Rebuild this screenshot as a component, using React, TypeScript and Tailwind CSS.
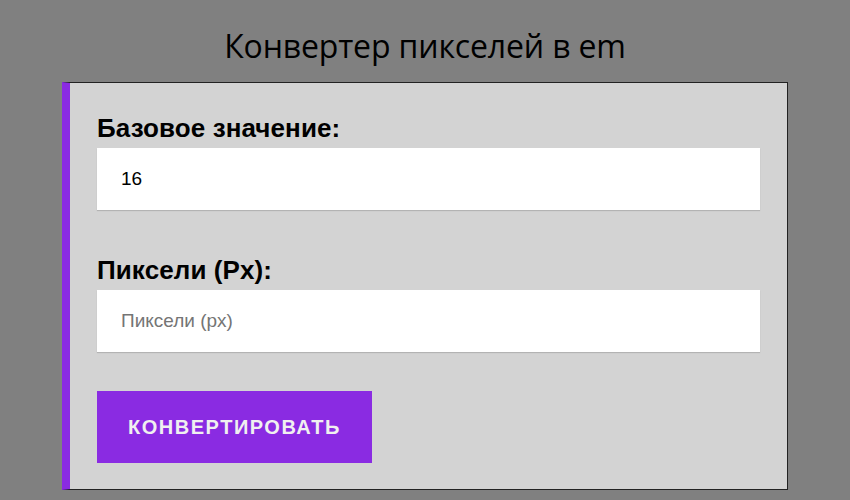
import React from "react";

export default function App() {
  return (
    <div className="min-h-[500px] bg-[#808080] pt-[22px] font-['Liberation_Sans',Arial,sans-serif]">
      <h1 className="text-center text-[32px] leading-[48px] text-black font-['Open_Sans',sans-serif] font-normal tracking-[-0.15px]">
        Конвертер пикселей в em
      </h1>
      <div className="mx-[62px] mt-[12px] border-l-[8px] border-l-[#8a2be2] border-t border-r border-b border-t-[#222] border-r-[#222] border-b-[#222] bg-[#d3d3d3] px-[27px] pt-[28px] pb-[26px]">
        <label className="block text-[26px] font-bold leading-[34px] tracking-[0.1px] text-black">
          Базовое значение:
        </label>
        <input
          defaultValue="16"
          className="mt-[3px] block h-[62px] w-full bg-white px-[24px] text-[19px] text-black outline-none shadow-[0_1px_1px_rgba(0,0,0,0.15)]"
        />
        <label className="mt-[43px] block text-[26px] font-bold leading-[34px] tracking-[0.1px] text-black">
          Пиксели (Px):
        </label>
        <input
          placeholder="Пиксели (px)"
          className="mt-[3px] block h-[62px] w-full bg-white px-[24px] text-[19px] text-black outline-none placeholder:text-[#757575] shadow-[0_1px_1px_rgba(0,0,0,0.15)]"
        />
        <button className="mt-[39px] block h-[72px] w-[275px] bg-[#8a2be2] text-[20px] font-bold uppercase tracking-[1.5px] text-[#f0f0f0]">
          Конвертировать
        </button>
      </div>
    </div>
  );
}
